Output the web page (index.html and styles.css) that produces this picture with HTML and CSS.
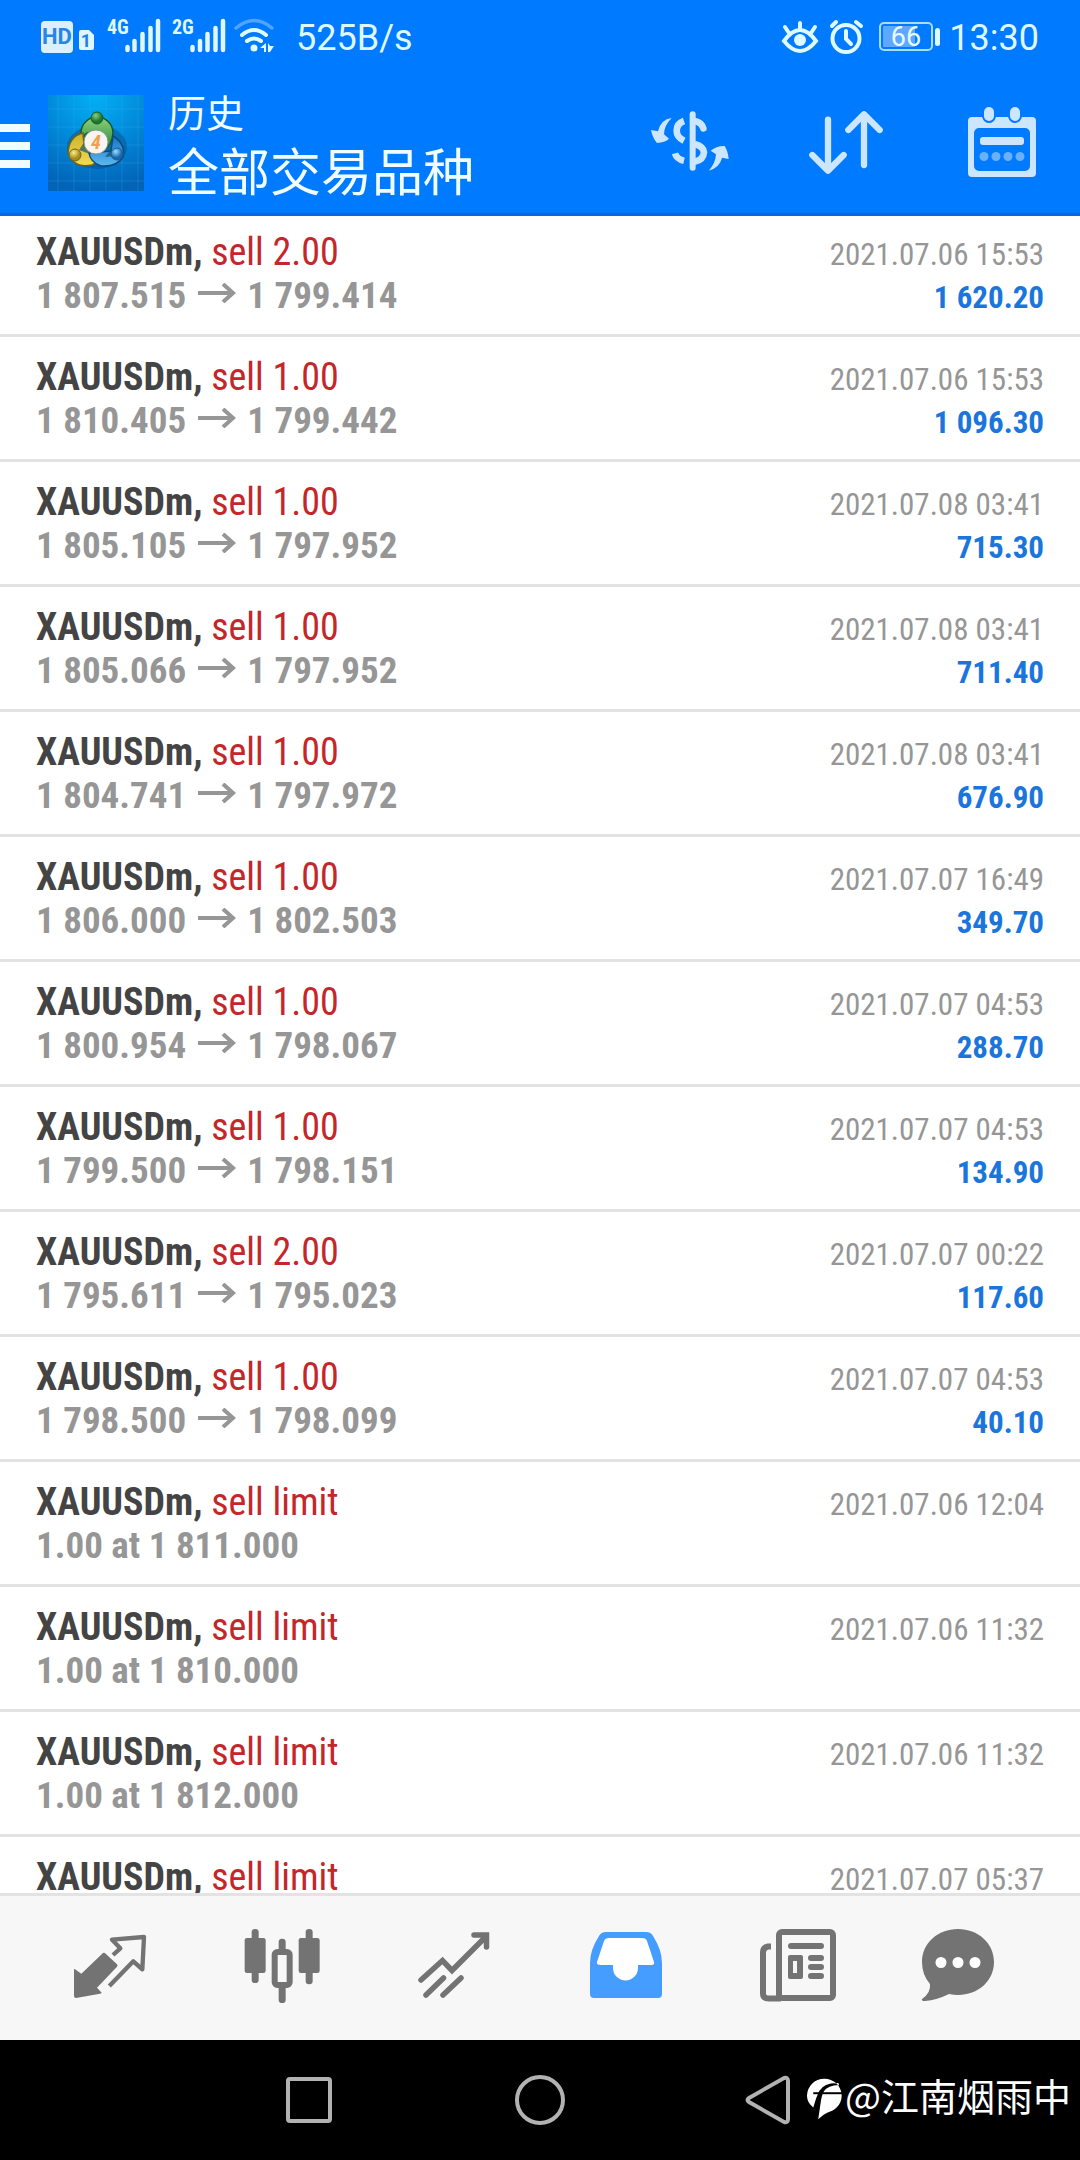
FILE: index.html
```html
<!DOCTYPE html>
<html lang="zh-CN">
<head>
<meta charset="utf-8">
<meta name="viewport" content="width=device-width, initial-scale=1">
<title>历史 - 全部交易品种</title>
<link rel="stylesheet" href="styles.css">
</head>
<body>
<header class="header">
  <div class="status">
    <svg class="status-sim" viewBox="40 16 236 40" aria-hidden="true">
      <rect x="41" y="21" width="32" height="32" rx="4" fill="#dcefff"/>
      <text x="57" y="44" class="svg-hd">HD</text>
      <path d="M81 30h8l5 5v13a2 2 0 0 1-2 2H81a2 2 0 0 1-2-2V32a2 2 0 0 1 2-2z" fill="#dff5ff"/>
      <text x="86" y="47" class="svg-slot">1</text>
      <text x="107" y="34" class="svg-net">4G</text>
      <path d="M127.500 47v3M134.500 41v9M142.500 34v16M150.500 28v22M158 21v29" stroke="#dff8ff" stroke-width="4.500" stroke-linecap="round"/>
      <text x="172" y="34" class="svg-net">2G</text>
      <path d="M192.500 47v3M200 41v9M207.500 34v16M215.500 28v22M223 21v29" stroke="#dff8ff" stroke-width="4.500" stroke-linecap="round"/>
      <g fill="none" stroke-linecap="round">
        <path d="M236 28Q254 13 272 28" stroke="#4fa5ff" stroke-width="3.500"/>
        <path d="M242 35Q254 25 266 35" stroke="#e3faff" stroke-width="4"/>
        <path d="M247 41Q254 36 261 41" stroke="#e3faff" stroke-width="4"/>
      </g>
      <circle cx="254" cy="48" r="3.500" fill="#e3faff"/>
      <path d="M260 48l6-5v9h-2v-4zM268 43v9h2l4-6h-4z" fill="#e3faff"/>
    </svg>
    <span class="status-text">525B/s</span>
    <div class="status-right">
      <svg class="status-icons" viewBox="778 16 164 40" aria-hidden="true">
        <g fill="none" stroke="#dffaff" stroke-width="4" stroke-linecap="round">
          <path d="M783 41Q799 19 815 41Q799 61 783 41zM799 23v6M784 27l4 6M814 27l-4 6"/>
          <circle cx="845" cy="38.500" r="13.500"/>
          <path d="M845 31v8l5 5M831 26l4-4M855 22l5 4"/>
        </g>
        <circle cx="799" cy="40" r="6" fill="#dffaff"/>
        <rect x="879" y="23" width="52" height="27" rx="4" fill="none" stroke="#a5dcff" stroke-width="2"/>
        <rect x="882" y="26" width="32" height="21" rx="1" fill="#60a8ff"/>
        <rect x="934" y="28" width="5" height="18" rx="2.500" fill="#dffaff"/>
        <text x="905" y="46" class="svg-battery">66</text>
      </svg>
      <span class="status-text">13:30</span>
    </div>
  </div>
  <div class="appbar">
    <button class="menu" aria-label="菜单"><span></span><span></span><span></span></button>
    <svg class="logo" viewBox="0 0 96 96" aria-hidden="true">
      <defs>
        <radialGradient id="sky" cx=".5" cy="0" r="1"><stop offset="0" stop-color="#02b1f5"/><stop offset=".5" stop-color="#028adb"/><stop offset="1" stop-color="#0263b7"/></radialGradient>
        <linearGradient id="green" x2="0" y2="1"><stop offset="0" stop-color="#8fd07e"/><stop offset="1" stop-color="#258a35"/></linearGradient>
        <linearGradient id="gold" x2="0" y2="1"><stop offset="0" stop-color="#cbb22c"/><stop offset="1" stop-color="#f2dc52"/></linearGradient>
        <linearGradient id="blue" x2="0" y2="1"><stop offset="0" stop-color="#1675c4"/><stop offset="1" stop-color="#5cb9f2"/></linearGradient>
        <radialGradient id="ballg" cx=".4" cy=".3"><stop offset="0" stop-color="#8bcf7a"/><stop offset="1" stop-color="#1d7530"/></radialGradient>
        <radialGradient id="bally" cx=".4" cy=".3"><stop offset="0" stop-color="#fbee8b"/><stop offset="1" stop-color="#a88a1a"/></radialGradient>
        <radialGradient id="ballb" cx=".4" cy=".3"><stop offset="0" stop-color="#9adcff"/><stop offset="1" stop-color="#1769ae"/></radialGradient>
      </defs>
      <rect width="96" height="96" fill="url(#sky)"/>
      <path d="M10 0v96M26 0v96M42 0v96M58 0v96M74 0v96M90 0v96M0 14h96M0 32h96M0 50h96M0 68h96M0 86h96" stroke="#4db4f0" stroke-opacity=".22"/>
      <ellipse cx="49" cy="52" rx="30" ry="22" fill="#023f6e" opacity=".35"/>
      <path d="M33 38a16 16 0 0 1 32 0q-1 12-8 16L41 38q-4-1-8 8z" fill="url(#green)" stroke="#155a2c" stroke-width="1.500"/>
      <path d="M35 38q-14 3-15 20q6 16 24 12l6-3L36 50z" fill="url(#gold)" stroke="#6b6316" stroke-width="1.500"/>
      <path d="M65 41q13 8 10 21q-6 10-22 9q-11-4-12-13l22-2z" fill="url(#blue)" stroke="#12497c" stroke-width="1.500"/>
      <path d="M39 38l6-3 4 5zM31 55l4-6 7 10zM57 62l6-8 4 7z" fill="#0b4b65" opacity=".65"/>
      <circle cx="49" cy="23" r="6" fill="url(#ballg)" stroke="#165f2a"/>
      <circle cx="27" cy="60" r="6" fill="url(#bally)" stroke="#756515"/>
      <circle cx="69" cy="59" r="6" fill="url(#ballb)" stroke="#175b97"/>
      <circle cx="48" cy="47" r="12" fill="#f6f5f2" stroke="#87958c"/>
      <text x="48" y="54" class="svg-four">4</text>
    </svg>
    <h1 class="titles"><span class="title-small">历史</span><span class="title-big">全部交易品种</span></h1>
    <div class="actions">
      <button aria-label="货币">
        <svg viewBox="24 6 252 252">
          <path d="M158 46v160" stroke="#cde6ff" stroke-width="18" stroke-linecap="round"/>
          <g fill="none" stroke="#cde6ff" stroke-width="20">
            <path d="M132 66Q110 74 110 95Q110 114 132 125"/>
            <path d="M164 66Q185 70 190 88" stroke-linecap="round"/>
            <path d="M164 135Q190 142 192 160Q190 184 164 188"/>
            <path d="M105 163Q110 180 132 185"/>
          </g>
          <path d="M95 57Q62 61 54 97L33 93Q38 118 51 132Q75 130 87 119L72 106Q72 80 95 57zM206 215Q240 205 246 176L266 180Q264 157 254 141Q230 140 212 155L228 166Q226 195 206 215z" fill="#cde6ff"/>
        </svg>
      </button>
      <button aria-label="排序">
        <svg viewBox="492 6 252 252" fill="none" stroke="#cde6ff" stroke-width="19" stroke-linecap="round" stroke-linejoin="round"><path d="M564 62v152M517 168l47 47 47-47M672 198V47M625 93l47-47 47 47"/></svg>
      </button>
      <button aria-label="日期">
        <svg viewBox="960 102 84 84">
          <path d="M972 118h10q2 6 7 6t7-6h12q2 6 7 6t7-6h10a4 4 0 0 1 4 4v52a4 4 0 0 1-4 4h-60a4 4 0 0 1-4-4v-52a4 4 0 0 1 4-4zM979 129a5 5 0 0 0-5 5v33a5 5 0 0 0 5 5h46a5 5 0 0 0 5-5v-33a5 5 0 0 0-5-5z" fill="#cde6ff" fill-rule="evenodd"/>
          <rect x="984" y="108" width="10" height="14" rx="5" fill="#cde6ff"/><rect x="1010" y="108" width="10" height="14" rx="5" fill="#cde6ff"/>
          <rect x="980" y="138" width="44" height="8" rx="3" fill="#cde6ff"/>
          <g fill="#69b0ff"><circle cx="984" cy="157.500" r="4.500"/><circle cx="996" cy="157.500" r="4.500"/><circle cx="1008" cy="157.500" r="4.500"/><circle cx="1020" cy="157.500" r="4.500"/></g>
        </svg>
      </button>
    </div>
  </div>
</header>

<svg class="defs" aria-hidden="true"><symbol id="arrow" viewBox="0 0 38 20"><path d="M0 10h35M25 1l10 9-10 9" fill="none" stroke="#969696" stroke-width="4"/></symbol></svg>

<main class="main">
<ul class="list">
  <li><div class="line"><span><b>XAUUSDm,</b> <span class="sell">sell 2.00</span></span><time>2021.07.06 15:53</time></div><div class="line price"><span>1 807.515 <svg class="arrow"><use href="#arrow"/></svg> 1 799.414</span><span class="profit">1 620.20</span></div></li>
  <li><div class="line"><span><b>XAUUSDm,</b> <span class="sell">sell 1.00</span></span><time>2021.07.06 15:53</time></div><div class="line price"><span>1 810.405 <svg class="arrow"><use href="#arrow"/></svg> 1 799.442</span><span class="profit">1 096.30</span></div></li>
  <li><div class="line"><span><b>XAUUSDm,</b> <span class="sell">sell 1.00</span></span><time>2021.07.08 03:41</time></div><div class="line price"><span>1 805.105 <svg class="arrow"><use href="#arrow"/></svg> 1 797.952</span><span class="profit">715.30</span></div></li>
  <li><div class="line"><span><b>XAUUSDm,</b> <span class="sell">sell 1.00</span></span><time>2021.07.08 03:41</time></div><div class="line price"><span>1 805.066 <svg class="arrow"><use href="#arrow"/></svg> 1 797.952</span><span class="profit">711.40</span></div></li>
  <li><div class="line"><span><b>XAUUSDm,</b> <span class="sell">sell 1.00</span></span><time>2021.07.08 03:41</time></div><div class="line price"><span>1 804.741 <svg class="arrow"><use href="#arrow"/></svg> 1 797.972</span><span class="profit">676.90</span></div></li>
  <li><div class="line"><span><b>XAUUSDm,</b> <span class="sell">sell 1.00</span></span><time>2021.07.07 16:49</time></div><div class="line price"><span>1 806.000 <svg class="arrow"><use href="#arrow"/></svg> 1 802.503</span><span class="profit">349.70</span></div></li>
  <li><div class="line"><span><b>XAUUSDm,</b> <span class="sell">sell 1.00</span></span><time>2021.07.07 04:53</time></div><div class="line price"><span>1 800.954 <svg class="arrow"><use href="#arrow"/></svg> 1 798.067</span><span class="profit">288.70</span></div></li>
  <li><div class="line"><span><b>XAUUSDm,</b> <span class="sell">sell 1.00</span></span><time>2021.07.07 04:53</time></div><div class="line price"><span>1 799.500 <svg class="arrow"><use href="#arrow"/></svg> 1 798.151</span><span class="profit">134.90</span></div></li>
  <li><div class="line"><span><b>XAUUSDm,</b> <span class="sell">sell 2.00</span></span><time>2021.07.07 00:22</time></div><div class="line price"><span>1 795.611 <svg class="arrow"><use href="#arrow"/></svg> 1 795.023</span><span class="profit">117.60</span></div></li>
  <li><div class="line"><span><b>XAUUSDm,</b> <span class="sell">sell 1.00</span></span><time>2021.07.07 04:53</time></div><div class="line price"><span>1 798.500 <svg class="arrow"><use href="#arrow"/></svg> 1 798.099</span><span class="profit">40.10</span></div></li>
  <li><div class="line"><span><b>XAUUSDm,</b> <span class="sell">sell limit</span></span><time>2021.07.06 12:04</time></div><div class="line price"><span>1.00 at 1 811.000</span></div></li>
  <li><div class="line"><span><b>XAUUSDm,</b> <span class="sell">sell limit</span></span><time>2021.07.06 11:32</time></div><div class="line price"><span>1.00 at 1 810.000</span></div></li>
  <li><div class="line"><span><b>XAUUSDm,</b> <span class="sell">sell limit</span></span><time>2021.07.06 11:32</time></div><div class="line price"><span>1.00 at 1 812.000</span></div></li>
  <li><div class="line"><span><b>XAUUSDm,</b> <span class="sell">sell limit</span></span><time>2021.07.07 05:37</time></div></li>
</ul>
</main>

<nav class="tabs">
  <button aria-label="行情">
    <svg viewBox="24 9 252 252">
      <path d="M129 99q4-2 8 2l34 32q3 4 0 7l-60 63 14 15q0 2-5 3l-72 13q-6 0-6-6V148q2-2 5 1l17 12z" fill="#737373"/>
      <path d="M159 105l22-20-25-26 96-8-5 97-27-24-72 74" fill="none" stroke="#737373" stroke-width="13" stroke-linejoin="round"/>
    </svg>
  </button>
  <button aria-label="图表">
    <svg viewBox="538 9 252 252" fill="#737373">
      <rect x="552" y="54" width="63" height="105" rx="7"/><rect x="573" y="27" width="21" height="162" rx="10"/>
      <rect x="714" y="54" width="63" height="105" rx="7"/><rect x="735" y="27" width="21" height="166" rx="10"/>
      <rect x="654" y="56" width="21" height="40" rx="10"/><rect x="654" y="190" width="21" height="59" rx="10"/>
      <rect x="642" y="96" width="45" height="99" rx="8" fill="#f7f7f7" stroke="#737373" stroke-width="18"/>
    </svg>
  </button>
  <button aria-label="交易">
    <svg viewBox="412 1923 84 84" fill="none" stroke="#737373" stroke-width="5.500" stroke-linecap="round"><path d="M421 1980l21.500-19.500 9.500 10 33-33M474 1935h12.500v12M426 1995l17.500-17M443 1995l18-17"/></svg>
  </button>
  <button aria-label="历史" aria-current="page">
    <svg viewBox="585 1923 84 84">
      <path d="M607 1932h40q5 0 7 4q9 14 9 27v31q0 4-4 4h-64q-4 0-4-4v-31q0-13 9-27q2-4 7-4z" fill="#459dff"/>
      <path d="M610 1938h33q4 0 5 3l7 21q1 3-3 3h-13v3a12 12 0 0 1-25 0v-3h-12q-5 0-4-3l7-21q1-3 5-3z" fill="#fff"/>
    </svg>
  </button>
  <button aria-label="新闻">
    <svg viewBox="758 1923 84 84">
      <path d="M773 1946.500h-3q-5 1-5 6v41q0 5 6 5h12" fill="none" stroke="#737373" stroke-width="6"/>
      <rect x="781" y="1932" width="54" height="66" rx="3" fill="#f7f7f7" stroke="#737373" stroke-width="6"/>
      <g fill="#737373"><rect x="790" y="1943" width="36" height="6" rx="3"/><rect x="790" y="1955" width="15" height="24" rx="2"/><rect x="810" y="1955" width="16" height="6" rx="3"/><rect x="810" y="1964" width="16" height="6" rx="3"/><rect x="810" y="1973" width="16" height="6" rx="3"/></g>
      <rect x="795" y="1961" width="4" height="12" fill="#f7f7f7"/>
    </svg>
  </button>
  <button aria-label="消息">
    <svg viewBox="928 1923 84 84" overflow="visible">
      <path d="M958 1929c20 0 36 14 36 33s-16 33-36 33q-4 0-9-1-12 6-24 7-4 0-3-2 9-6 8-15-8-9-8-22c0-19 16-33 36-33z" fill="#737373"/>
      <g fill="#fff"><circle cx="941" cy="1962.500" r="5.500"/><circle cx="958" cy="1962.500" r="5.500"/><circle cx="975" cy="1962.500" r="5.500"/></g>
    </svg>
  </button>
</nav>

<footer class="sysbar">
  <button aria-label="最近"><svg viewBox="0 0 54 54"><rect x="5" y="6" width="42" height="42" rx="2"/></svg></button>
  <button aria-label="主页"><svg viewBox="0 0 54 54"><circle cx="27" cy="27" r="23"/></svg></button>
  <button aria-label="返回"><svg viewBox="0 0 54 54"><path d="M6 25L41 5q4-1 4 3v38q0 4-4 3L6 29q-3-2 0-4z"/></svg></button>
  <div class="watermark">
    <svg viewBox="198 60 112 130" aria-hidden="true">
      <path d="M253 65a52 52 0 0 1 53 52c0 30-24 46-44 51q-14 6-27 20l7-48q3-24 10-36 12-20 46-20l-2-6q-42-2-58 24-10 20-18 50C207 142 201 130 201 117A52 52 0 0 1 253 65z" fill="#fff"/>
      <path d="M220 109h88" stroke="#000" stroke-width="6"/>
    </svg>
    <span>@江南烟雨中</span>
  </div>
</footer>
</body>
</html>
```
FILE: styles.css
```css
* { box-sizing: border-box; }

body {
  margin: 0;
  height: 100vh;
  display: flex;
  flex-direction: column;
  overflow: hidden;
  background: #fff;
  font-family: Roboto, "Noto Sans CJK SC", sans-serif;
}

button {
  margin: 0;
  padding: 0;
  border: 0;
  background: none;
  cursor: pointer;
}

svg { display: block; }
.defs { position: absolute; width: 0; height: 0; }

/* Header */
.header {
  flex: none;
  background: #007aff;
  border-bottom: 3px solid #0a68dc;
  color: #f0fcff;
}

.status {
  display: flex;
  align-items: center;
  height: 72px;
  padding: 0 41px 0 40px;
}

.status-sim { width: 236px; height: 40px; }
.status-icons { width: 164px; height: 40px; }
.status-text { font-size: 36px; line-height: 40px; color: #dff8ff; padding-top: 4px; }
.status-sim + .status-text { margin-left: 20px; }
.status-right { display: flex; align-items: center; gap: 6px; margin-left: auto; }

.svg-hd { font: 700 22px Roboto, sans-serif; fill: #2785e8; text-anchor: middle; }
.svg-slot { font: 700 18px Roboto, sans-serif; fill: #2080f0; text-anchor: middle; }
.svg-net { font: 700 20px "Roboto Condensed", Roboto, sans-serif; fill: #dff8ff; }
.svg-battery { font: 400 27px Roboto, sans-serif; fill: #e8fcff; text-anchor: middle; }
.svg-four { font: italic 700 20px "Roboto Condensed", Roboto, sans-serif; fill: #f3a04e; text-anchor: middle; }

.appbar {
  display: flex;
  align-items: center;
  height: 141px;
  padding-right: 36px;
}

.menu { display: flex; flex-direction: column; gap: 10px; width: 30px; padding-top: 6px; }
.menu span { height: 8px; background: #f0fcff; }
.logo { width: 96px; height: 96px; margin-left: 18px; }

.titles { display: flex; flex-direction: column; margin: 0 0 0 24px; padding-top: 8px; font-weight: 400; }
.title-small { font-size: 38px; line-height: 54px; }
.title-big { font-size: 51px; line-height: 66px; }

.actions { display: flex; gap: 72px; margin-left: auto; }
.actions svg { width: 84px; height: 84px; }

/* History list */
.main { flex: 1; min-height: 0; overflow: hidden; }

.list {
  margin: -4px 0 0;
  padding: 0;
  list-style: none;
  font-family: "Roboto Condensed", Roboto, sans-serif;
  font-size: 38px;
  line-height: 44px;
}

.list li { padding: 18px 36px 16px; border-bottom: 3px solid #e3e3e3; }
.line { display: flex; justify-content: space-between; align-items: baseline; height: 44px; }
.line b { color: #444; }
.sell { color: #c4262a; }
.line time { font-size: 31px; color: #969696; }
.price { font-size: 37px; color: #969696; font-weight: 700; }
.profit { font-size: 31px; color: #1a75dc; }
.arrow { display: inline-block; width: 38px; height: 20px; margin: 0 3px; vertical-align: 5px; }

/* Bottom tabs */
.tabs {
  flex: none;
  display: grid;
  grid-template-columns: repeat(6, 1fr);
  height: 147px;
  padding: 0 24px 6px;
  border-top: 3px solid #e3e3e3;
  background: #f7f7f7;
}

.tabs button { display: flex; align-items: center; justify-content: center; }
.tabs svg { width: 84px; height: 84px; }

/* System navigation */
.sysbar {
  flex: none;
  position: relative;
  display: flex;
  height: 120px;
  padding: 0 18%;
  background: #000;
}

.sysbar button { flex: 1; display: flex; align-items: center; justify-content: center; }
.sysbar button svg { width: 54px; height: 54px; fill: none; stroke: #b2b2b2; stroke-width: 4; }

.watermark {
  position: absolute;
  right: 9px;
  top: 28px;
  display: flex;
  align-items: center;
  gap: 2px;
  color: #fff;
  font-family: "Noto Sans CJK SC", sans-serif;
  font-size: 38px;
  line-height: 54px;
}

.watermark svg { width: 37px; height: 43px; margin-top: 6px; }
```
